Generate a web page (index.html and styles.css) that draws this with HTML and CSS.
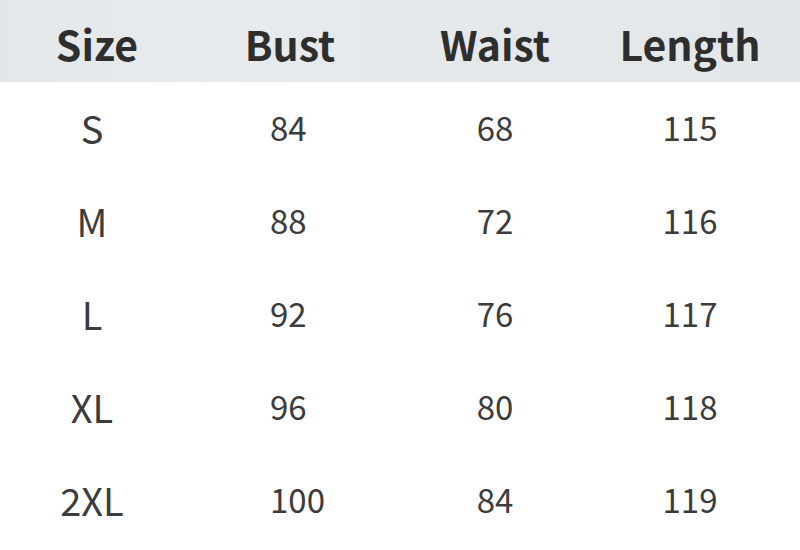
FILE: index.html
```html
<!DOCTYPE html>
<html>
<head>
<meta charset="utf-8">
<link rel="stylesheet" href="styles.css">
</head>
<body>
<div class="table">
  <div class="row head">
    <div class="cell c1">Size</div>
    <div class="cell c2">Bust</div>
    <div class="cell c3">Waist</div>
    <div class="cell c4">Length</div>
  </div>
  <div class="row">
    <div class="cell c1 size">S</div>
    <div class="cell c2 num">84</div>
    <div class="cell c3 num">68</div>
    <div class="cell c4 num">115</div>
  </div>
  <div class="row">
    <div class="cell c1 size">M</div>
    <div class="cell c2 num">88</div>
    <div class="cell c3 num">72</div>
    <div class="cell c4 num">116</div>
  </div>
  <div class="row">
    <div class="cell c1 size">L</div>
    <div class="cell c2 num">92</div>
    <div class="cell c3 num">76</div>
    <div class="cell c4 num">117</div>
  </div>
  <div class="row">
    <div class="cell c1 size">XL</div>
    <div class="cell c2 num">96</div>
    <div class="cell c3 num">80</div>
    <div class="cell c4 num">118</div>
  </div>
  <div class="row">
    <div class="cell c1 size">2XL</div>
    <div class="cell c2 num">100</div>
    <div class="cell c3 num">84</div>
    <div class="cell c4 num">119</div>
  </div>
</div>
</body>
</html>
```
FILE: styles.css
```css
html, body {
  margin: 0;
  padding: 0;
  background: #ffffff;
}
body {
  width: 800px;
  height: 550px;
  overflow: hidden;
  font-family: "Noto Sans CJK SC", "Noto Sans", sans-serif;
  color: #3c3c3c;
}
.table {
  display: flex;
  flex-direction: column;
}
.row {
  display: grid;
  grid-template-columns: 190px 200px 210px 180px;
  height: 93px;
  align-items: center;
}
.cell {
  text-align: center;
  line-height: 1;
}
.head {
  height: 82px;
  background: linear-gradient(90deg, #e4e7ea 0%, #e8ebee 25%, #e5e8ea 60%, #e4e7e9 100%);
  font-weight: 700;
  font-size: 41px;
  color: #2e2e2e;
}
.head .c1 { padding-left: 4px; }
.head .cell { padding-top: 4px; }
.size {
  font-size: 38px;
  padding-right: 6px;
}
.num {
  font-size: 33px;
}
.row:not(.head) .c2 {
  text-align: left;
  padding-left: 80px;
}
.row:not(.head) .cell { padding-bottom: 2px; }
```
